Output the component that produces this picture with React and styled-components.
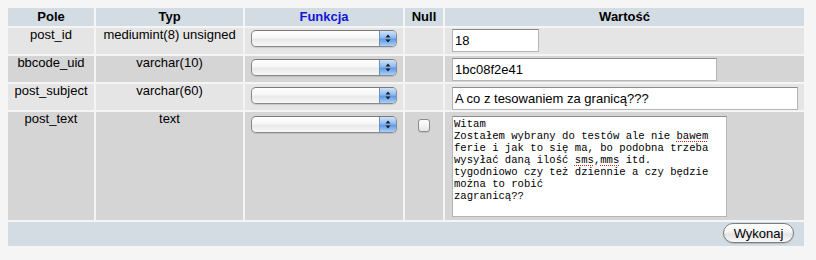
import React from "react";
import styled, { createGlobalStyle } from "styled-components";

const Global = createGlobalStyle`
  html, body { margin: 0; padding: 0; background: #f5f5f5; }
  body { font-family: "Liberation Sans", Arial, sans-serif; font-size: 13px; color: #000; }
`;

const Page = styled.div`
  padding: 8px;
`;

const Table = styled.div`
  width: 796px;
  display: flex;
  flex-direction: column;
  gap: 2px;
`;

const Row = styled.div`
  display: grid;
  grid-template-columns: 86px 147px 158px 38px 359px;
  gap: 2px;
  height: ${(p) => p.$h}px;
`;

const HeadCell = styled.div`
  background: #d3dce3;
  font-weight: bold;
  text-align: center;
  line-height: 18px;
  color: ${(p) => p.$link ? "#1414d6" : "#000"};
`;

const Cell = styled.div`
  background: ${(p) => (p.$alt ? "#d5d5d5" : "#e5e5e5")};
  text-align: center;
  line-height: 14px;
`;

const CenterCell = styled(Cell)`
  display: flex;
  justify-content: center;
  align-items: flex-start;
`;

const ValueCell = styled(Cell)`
  text-align: left;
  padding-left: 7px;
  display: flex;
  align-items: flex-start;
`;

const SelectBox = styled.div`
  margin-top: ${(p) => p.$mt}px;
  width: 146px;
  height: 17px;
  box-sizing: border-box;
  border: 1px solid #8a8a8a;
  border-top-color: #7a7a7a;
  border-radius: 5px;
  background: linear-gradient(#ffffff 0%, #f6f6f6 45%, #e9e9e9 55%, #f7f7f7 100%);
  box-shadow: 0 1px 1px rgba(0,0,0,0.12);
  display: flex;
  justify-content: flex-end;
  overflow: hidden;
`;

const SelectArrow = styled.div`
  width: 16px;
  height: 100%;
  border-left: 1px solid #6f8fb8;
  background: linear-gradient(#cfe2fa 0%, #8fbaf0 45%, #5d9ae6 55%, #a9d0fa 100%);
  display: flex;
  align-items: center;
  justify-content: center;
`;

const TextInput = styled.input`
  margin-top: ${(p) => p.$mt}px;
  width: ${(p) => p.$w}px;
  height: 23px;
  box-sizing: border-box;
  border: 1px solid #b5b5b5;
  border-top-color: #8c8c8c;
  background: #fff;
  padding: 0 2px;
  font-family: "Liberation Sans", Arial, sans-serif;
  font-size: 13px;
  color: #000;
  outline: none;
`;

const Check = styled.span`
  margin-top: 7px;
  width: 12px;
  height: 13px;
  box-sizing: border-box;
  border: 1px solid #8c8c8c;
  border-radius: 3px;
  background: linear-gradient(#ffffff, #e6e6e6);
  box-shadow: 0 1px 1px rgba(0,0,0,0.1);
`;

const TextArea = styled.div`
  margin-top: 4px;
  width: 275px;
  height: 101px;
  box-sizing: border-box;
  border: 1px solid #b5b5b5;
  border-top-color: #8c8c8c;
  background: #fff;
  padding: 1px 1px;
  font-family: "Liberation Mono", "Courier New", monospace;
  font-size: 10.6px;
  line-height: 12px;
  white-space: pre;
  color: #000;
  overflow: hidden;
`;

const Misspelled = styled.span`
  text-decoration: underline dotted #d02020;
  text-underline-offset: 2px;
`;

const Footer = styled.div`
  height: 24px;
  background: #d3dce3;
  display: flex;
  justify-content: flex-end;
  align-items: flex-start;
  padding-right: 10px;
`;

const Button = styled.button`
  margin-top: 1px;
  width: 71px;
  height: 20px;
  box-sizing: border-box;
  border: 1px solid #7d7d7d;
  border-radius: 10px;
  background: linear-gradient(#ffffff 0%, #f4f4f4 45%, #e4e4e4 55%, #f8f8f8 100%);
  box-shadow: 0 1px 1px rgba(0,0,0,0.15);
  font-family: "Liberation Sans", Arial, sans-serif;
  font-size: 13px;
  color: #000;
  padding: 0;
  line-height: 17px;
`;

const Arrows = () => (
  <svg width="6" height="9" viewBox="0 0 6 9">
    <path d="M3 0.5 L5.5 3.5 L0.5 3.5 Z" fill="#1b1b1b" />
    <path d="M3 8.5 L5.5 5.5 L0.5 5.5 Z" fill="#1b1b1b" />
  </svg>
);

const Select = ({ mt }) => (
  <SelectBox $mt={mt}>
    <SelectArrow>
      <Arrows />
    </SelectArrow>
  </SelectBox>
);

const rows = [
  { name: "post_id", type: "mediumint(8) unsigned", value: "18", w: 87, h: 26, mt: 1, smt: 2 },
  { name: "bbcode_uid", type: "varchar(10)", value: "1bc08f2e41", w: 265, h: 26, mt: 2, smt: 3, alt: true },
  { name: "post_subject", type: "varchar(60)", value: "A co z tesowaniem za granicą???", w: 346, h: 26, mt: 3, smt: 3 },
];

export default function App() {
  return (
    <Page>
      <Global />
      <Table>
        <Row $h={18}>
          <HeadCell>Pole</HeadCell>
          <HeadCell>Typ</HeadCell>
          <HeadCell $link>Funkcja</HeadCell>
          <HeadCell>Null</HeadCell>
          <HeadCell>Wartość</HeadCell>
        </Row>
        {rows.map((r) => (
          <Row key={r.name} $h={r.h}>
            <Cell $alt={r.alt}>{r.name}</Cell>
            <Cell $alt={r.alt}>{r.type}</Cell>
            <CenterCell $alt={r.alt}>
              <Select mt={r.smt} />
            </CenterCell>
            <Cell $alt={r.alt} />
            <ValueCell $alt={r.alt}>
              <TextInput $w={r.w} $mt={r.mt} value={r.value} readOnly />
            </ValueCell>
          </Row>
        ))}
        <Row $h={108}>
          <Cell $alt>post_text</Cell>
          <Cell $alt>text</Cell>
          <CenterCell $alt>
            <Select mt={4} />
          </CenterCell>
          <CenterCell $alt>
            <Check />
          </CenterCell>
          <ValueCell $alt>
            <TextArea>
              {"Witam\nZostałem wybrany do testów ale nie "}
              <Misspelled>bawem</Misspelled>
              {"\nferie i jak to się ma, bo podobna trzeba\nwysyłać daną ilość "}
              <Misspelled>sms</Misspelled>
              {","}
              <Misspelled>mms</Misspelled>
              {" itd.\ntygodniowo czy też dziennie a czy będzie\nmożna to robić\nzagranicą??"}
            </TextArea>
          </ValueCell>
        </Row>
        <Footer>
          <Button>Wykonaj</Button>
        </Footer>
      </Table>
    </Page>
  );
}
